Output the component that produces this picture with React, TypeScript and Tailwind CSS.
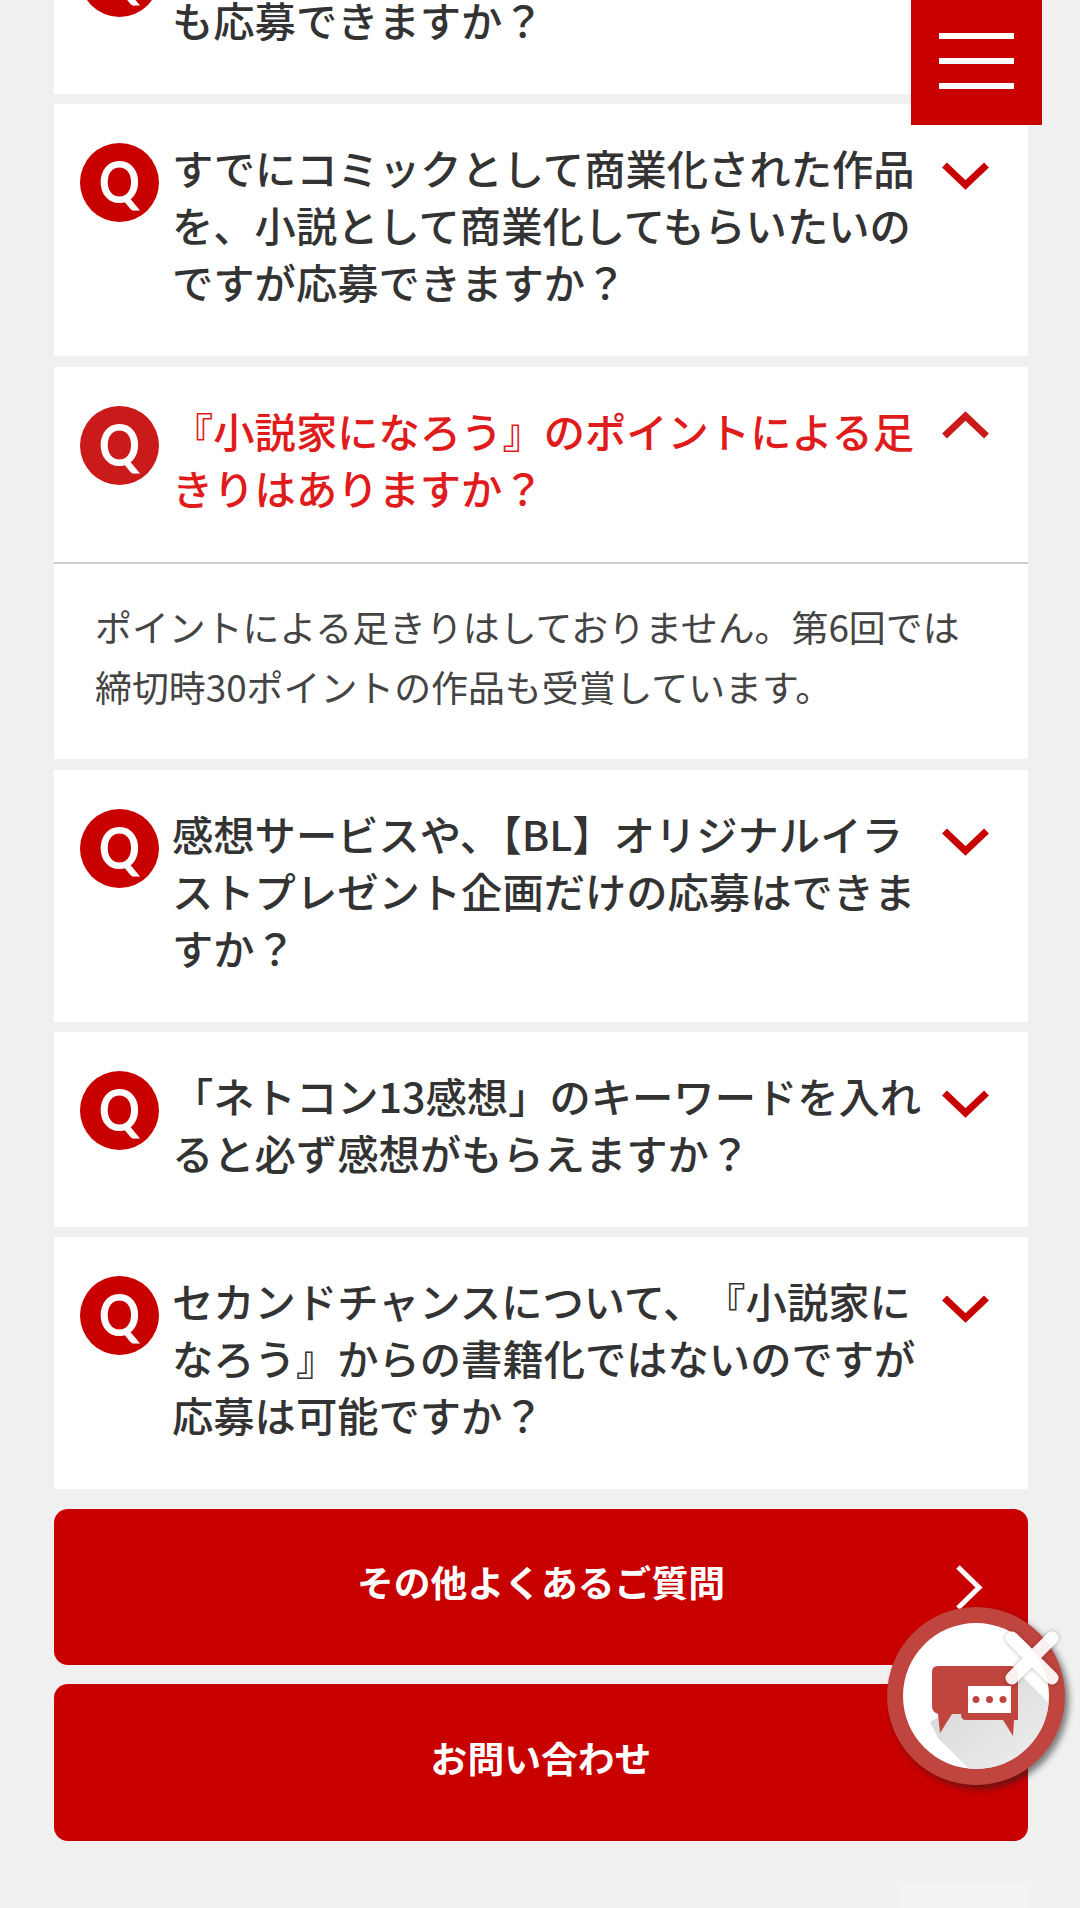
import React from "react";

const cjk = "font-['Noto_Sans_CJK_JP','Noto_Sans',sans-serif]";

function Chevron({ up }: { up?: boolean }) {
  return (
    <svg
      viewBox="0 0 47 30"
      className={`ml-[25px] w-[47px] h-[30px] shrink-0 ${up ? "mt-[7px]" : "mt-[23px]"}`}
    >
      <path
        d={up ? "M2.5 27 L23.5 7 L44.5 27" : "M2.5 3 L23.5 23 L44.5 3"}
        fill="none"
        stroke={up ? "#cb1a1a" : "#c80000"}
        strokeWidth="7"
      />
    </svg>
  );
}

function Faq({ lines, open, noTrim }: { lines: string[]; open?: boolean; noTrim?: boolean }) {
  return (
    <div className="flex pl-[26px] pt-[35px] pb-[46px]">
      <div
        className={`mt-[4px] w-[79px] h-[79px] shrink-0 rounded-full flex items-center justify-center pb-[3px] text-white text-[58px] leading-none font-bold font-['Lato',sans-serif] ${open ? "bg-[#cb1a1a]" : "bg-[#c80000]"}`}
      >
        <span className="block scale-x-[.88]">Q</span>
      </div>
      <p
        className={`ml-[13px] w-[745px] shrink-0 text-[41.3px] leading-[57px] font-medium whitespace-nowrap ${open ? "text-[#e01b1b]" : "text-[#333333]"} ${noTrim ? "[text-spacing-trim:space-all]" : ""}`}
      >
        {lines.map((l, i) => (
          <span key={i} className="block">
            {l}
          </span>
        ))}
      </p>
      <Chevron up={open} />
    </div>
  );
}

function ActionButton({ label, arrow, className }: { label: string; arrow?: boolean; className: string }) {
  return (
    <div
      className={`relative flex items-center justify-center pb-[10px] rounded-[14px] bg-[#c80000] text-white text-[36.8px] font-bold ${className}`}
    >
      {label}
      {arrow && (
        <svg viewBox="0 0 28 47" className="absolute right-[45px] top-[55px] w-[28px] h-[47px]">
          <path d="M3 3 L24 23.5 L3 44" fill="none" stroke="#ffffff" strokeWidth="5" />
        </svg>
      )}
    </div>
  );
}

function ChatWidget() {
  return (
    <svg
      viewBox="880 1600 200 200"
      className="absolute left-[880px] top-[1600px] w-[200px] h-[200px]"
    >
      <defs>
        <clipPath id="inner">
          <circle cx="976" cy="1696" r="73" />
        </clipPath>
        <linearGradient id="longShadow" x1="0" y1="0" x2="1" y2="1">
          <stop offset="0" stopColor="#d4d4d4" />
          <stop offset="1" stopColor="#f4f4f4" />
        </linearGradient>
        <filter id="soft" x="-20%" y="-20%" width="140%" height="140%">
          <feGaussianBlur stdDeviation="3" />
        </filter>
        <filter id="xShadow" x="-30%" y="-30%" width="160%" height="160%">
          <feDropShadow dx="0" dy="0" stdDeviation="2" floodColor="#000000" floodOpacity="0.35" />
        </filter>
      </defs>
      <circle cx="980" cy="1700" r="89" fill="#222222" opacity="0.55" filter="url(#soft)" />
      <circle cx="976" cy="1696" r="89" fill="#c0453e" />
      <circle cx="976" cy="1696" r="73" fill="#ffffff" />
      <polygon
        points="1018,1672 1070,1724 990,1790 938,1738 930,1722"
        fill="url(#longShadow)"
        clipPath="url(#inner)"
      />
      <path
        d="M938 1666 H1010 Q1018 1666 1018 1674 V1720 H1014 L1013 1736 L1003 1720 H966 Q961 1720 961 1714 H952 L940 1733 L938 1714 Q932 1712 932 1706 V1672 Q932 1666 938 1666 Z"
        fill="#c0453e"
      />
      <rect x="968" y="1686" width="43" height="27" fill="#ffffff" />
      <circle cx="976" cy="1699.5" r="3.5" fill="#c0453e" />
      <circle cx="989.5" cy="1699.5" r="3.5" fill="#c0453e" />
      <circle cx="1003" cy="1699.5" r="3.5" fill="#c0453e" />
      <g stroke="#ffffff" strokeWidth="13" strokeLinecap="round" opacity="0.92" filter="url(#xShadow)">
        <path d="M1012 1638 L1052 1678 M1052 1638 L1012 1678" />
      </g>
    </svg>
  );
}

export default function App() {
  return (
    <div className={`relative w-[1080px] h-[1908px] overflow-hidden bg-[#f0f0f0] ${cjk}`}>
      <div className="-mt-[101px] pl-[54px] pr-[52px] flex flex-col">
        <div className="bg-white">
          <Faq lines={["すでに書籍化された作品で", "も応募できますか？"]} />
        </div>
        <div className="mt-[10px] bg-white">
          <Faq lines={["すでにコミックとして商業化された作品", "を、小説として商業化してもらいたいの", "ですが応募できますか？"]} />
        </div>
        <div className="mt-[11px] bg-white">
          <Faq open lines={["『小説家になろう』のポイントによる足", "きりはありますか？"]} />
          <div className="border-t-2 border-[#cccccc] pl-[41px] pt-[32px] pb-[43px] text-[36.9px] leading-[60px] text-[#444444]">
            <span className="block">ポイントによる足きりはしておりません。第6回では</span>
            <span className="block">締切時30ポイントの作品も受賞しています。</span>
          </div>
        </div>
        <div className="mt-[11px] bg-white">
          <Faq lines={["感想サービスや、【BL】オリジナルイラ", "ストプレゼント企画だけの応募はできま", "すか？"]} />
        </div>
        <div className="mt-[10px] bg-white">
          <Faq lines={["「ネトコン13感想」のキーワードを入れ", "ると必ず感想がもらえますか？"]} />
        </div>
        <div className="mt-[10px] bg-white">
          <Faq noTrim lines={["セカンドチャンスについて、『小説家に", "なろう』からの書籍化ではないのですが", "応募は可能ですか？"]} />
        </div>
        <ActionButton label="その他よくあるご質問" arrow className="mt-[20px] h-[156px]" />
        <ActionButton label="お問い合わせ" className="mt-[19px] h-[157px]" />
      </div>

      <div className="absolute left-[911px] top-0 w-[131px] h-[125px] bg-[#c80000] flex flex-col items-center pt-[33px] gap-[19px]">
        <span className="block w-[75px] h-[6px] bg-white" />
        <span className="block w-[75px] h-[6px] bg-white" />
        <span className="block w-[75px] h-[6px] bg-white" />
      </div>

      <ChatWidget />
      <div className="absolute left-[898px] top-[1882px] w-[132px] h-[26px] bg-[#f3f3f6]" />
    </div>
  );
}
